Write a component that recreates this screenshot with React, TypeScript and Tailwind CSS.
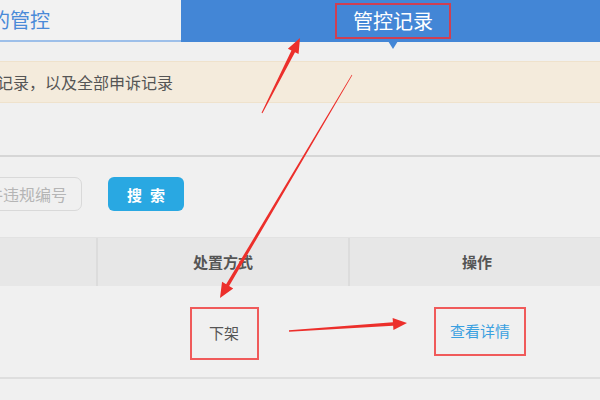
import React from 'react'

type Pt = [number, number]

// builds a tapered arrow polygon from tail to tip
const arrowPoints = (tail: Pt, tip: Pt, w0: number, w1: number, headLen: number, headHalf: number) => {
  const dx = tip[0] - tail[0]
  const dy = tip[1] - tail[1]
  const len = Math.hypot(dx, dy)
  const ux = dx / len
  const uy = dy / len
  const px = -uy
  const py = ux
  const bx = tip[0] - ux * headLen
  const by = tip[1] - uy * headLen
  const pts: Pt[] = [
    [tail[0] + px * w0 / 2, tail[1] + py * w0 / 2],
    [bx + px * w1 / 2, by + py * w1 / 2],
    [bx + px * headHalf, by + py * headHalf],
    tip,
    [bx - px * headHalf, by - py * headHalf],
    [bx - px * w1 / 2, by - py * w1 / 2],
    [tail[0] - px * w0 / 2, tail[1] - py * w0 / 2],
  ]
  return pts.map((p) => p.join(',')).join(' ')
}

const Arrows = () => (
  <svg className="pointer-events-none absolute inset-0" width="600" height="400">
    <polygon points={arrowPoints([262, 113], [300, 38], 1, 4, 15, 6)} fill="#ec2f2b" />
    <polygon points={arrowPoints([352, 75], [220, 298], 0.6, 3.5, 15, 6.5)} fill="#ec2f2b" />
    <polygon points={arrowPoints([289, 331], [407, 323], 1.5, 3.5, 14, 6)} fill="#ec2f2b" />
  </svg>
)

export default function App() {
  return (
    <div
      className="relative h-[400px] w-[600px] overflow-hidden bg-[#f0f0f0]"
      style={{ fontFamily: '"Noto Sans CJK SC", "Noto Sans", sans-serif' }}
    >
      {/* tabs */}
      <div className="flex h-[42px]">
        <div className="flex w-[181px] items-center overflow-hidden border-b-2 border-[#9dbfe9] bg-[#f2f2f2]">
          <span className="ml-[-30px] whitespace-nowrap text-[20px] leading-none text-[#4a8ad8]">我的管控</span>
        </div>
        <div className="relative flex flex-1 items-center justify-center bg-[#4386d6] pl-[5px]">
          <div className="flex h-[36px] w-[116px] items-center justify-center border-2 border-[#cf3f52]">
            <span className="text-[20px] leading-none text-white">管控记录</span>
          </div>
          <div className="absolute left-[207px] top-[41px] h-0 w-0 border-x-[5px] border-t-[8px] border-x-transparent border-t-[#4386d6]" />
        </div>
      </div>

      {/* notice */}
      <div className="mt-[19px] flex h-[42px] items-center overflow-hidden border-y border-[#efe2cc] bg-[#f4ebdc]">
        <span className="ml-[-35px] whitespace-nowrap text-[16px] leading-none text-[#555]">申诉记录，以及全部申诉记录</span>
      </div>

      <div className="mt-[52px] h-[2px] bg-[#d6d6d6]" />

      {/* search */}
      <div className="mt-[20px] flex items-center gap-[26px]">
        <div className="ml-[-20px] flex h-[34px] w-[102px] items-center justify-end overflow-hidden rounded-[7px] border border-[#d9d9d9] pr-[14px]">
          <span className="whitespace-nowrap text-[16px] leading-none text-[#b5b5b5]">件违规编号</span>
        </div>
        <button className="flex h-[34px] w-[76px] items-center justify-center rounded-[6px] bg-[#29a8e2] text-[15px] font-bold leading-none tracking-[8px] text-white">
          <span className="ml-[8px]">搜索</span>
        </button>
      </div>

      {/* table */}
      <div className="mt-[26px]">
        <div className="grid h-[49px] grid-cols-[98px_252px_1fr] border-t border-[#e2e2e2] bg-[#e7e7e7] text-[15px] font-bold text-[#555]">
          <div className="border-r-2 border-[#dcdcdc]" />
          <div className="flex items-center justify-center border-r-2 border-[#dcdcdc]">处置方式</div>
          <div className="flex items-center justify-center pl-[4px]">操作</div>
        </div>
        <div className="grid h-[93px] grid-cols-[98px_252px_1fr] border-b-2 border-[#dedede] text-[15px]">
          <div />
          <div className="flex items-center justify-center pt-[4px]">
            <div className="flex h-[53px] w-[69px] items-center justify-center border-2 border-[#f05a5a] text-[#555]">下架</div>
          </div>
          <div className="flex items-center justify-center pl-[10px]">
            <div className="flex h-[49px] w-[92px] items-center justify-center border-2 border-[#f05a5a] text-[#3aa0e0]">查看详情</div>
          </div>
        </div>
      </div>

      <Arrows />
    </div>
  )
}
